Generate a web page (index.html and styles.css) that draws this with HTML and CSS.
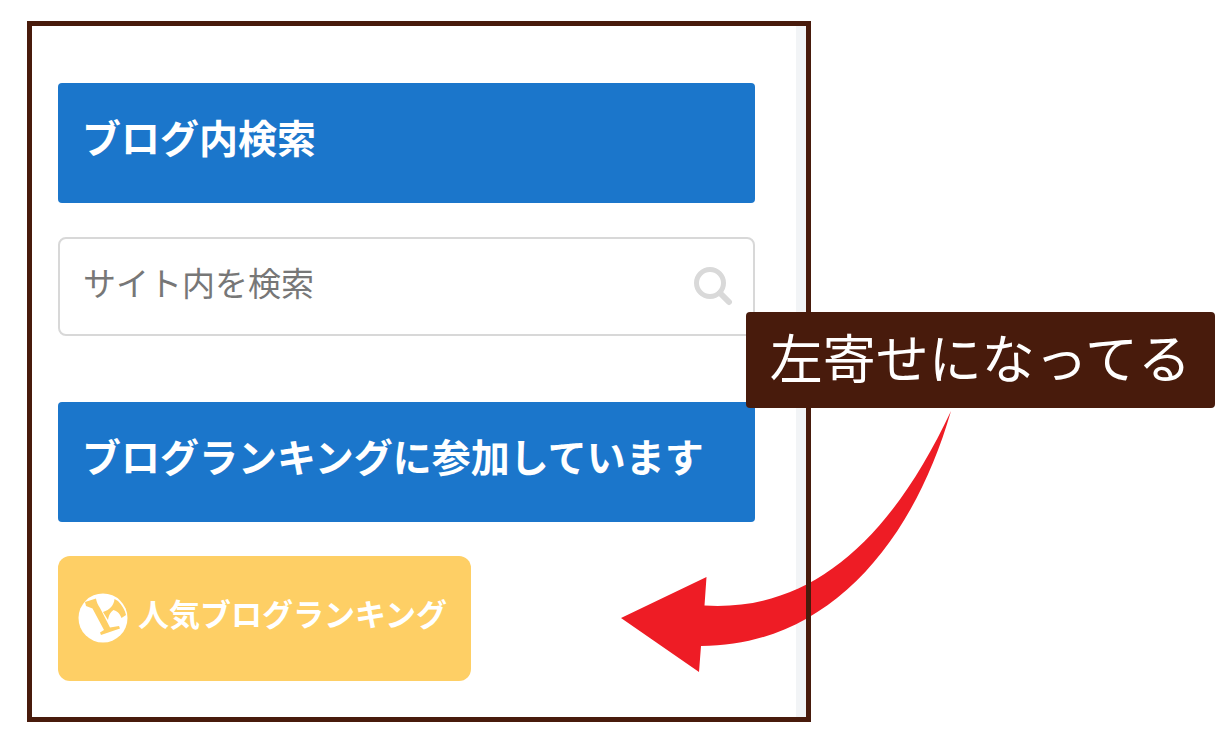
FILE: index.html
```html
<!DOCTYPE html>
<html lang="ja">
<head>
  <meta charset="utf-8">
  <meta name="viewport" content="width=device-width, initial-scale=1">
  <title>ブログ内検索</title>
  <link rel="stylesheet" href="styles.css">
</head>
<body>
  <main class="stage">
    <aside class="sidebar">
      <section class="widget">
        <h2 class="widget-title"><label for="site-search">ブログ内検索</label></h2>
        <form class="search" role="search">
          <input class="search-input" id="site-search" type="text" placeholder="サイト内を検索">
          <button class="search-button" type="button" aria-label="検索">
            <svg class="search-icon" viewBox="0 0 40 40" aria-hidden="true">
              <circle cx="17" cy="16" r="13.5" fill="none" stroke="currentColor" stroke-width="5"/>
              <path d="M27 26L36 35" fill="none" stroke="currentColor" stroke-width="6" stroke-linecap="round"/>
            </svg>
          </button>
        </form>
      </section>
      <section class="widget">
        <h2 class="widget-title">ブログランキングに参加しています</h2>
        <a class="ranking" href="#">
          <svg class="ranking-icon" viewBox="0 0 50 50" aria-hidden="true">
            <circle cx="25" cy="25" r="24.500" fill="#fff"/>
            <path d="M7 9L18 5.500C18.500 9 20 12 22 15L32 34.500L41 33L42 35.500L23 42L22 39.500L26 37L14.500 15.500L8 13Z" fill="#fecf65"/>
            <path d="M25 19C32 17 36 12 36.500 6L40 8C44 12 47 17 48 22L43.500 25C41.500 20 39 18 35.500 17C33 19 31 21 30 27Z" fill="#fecf65"/>
          </svg>
          <span>人気ブログランキング</span>
        </a>
      </section>
    </aside>
    <svg class="arrow" viewBox="0 0 331 263" aria-hidden="true">
      <path d="M331 1C292 136 206 236 81 236L79 262L1 208L86.500 167L84.500 195.500C190 202 270 131 331 1Z" fill="#ee1c25"/>
    </svg>
    <p class="callout">左寄せになってる</p>
  </main>
</body>
</html>
```
FILE: styles.css
```css
* {
  box-sizing: border-box;
}

body {
  margin: 0;
  background: #fff;
  font-family: "Noto Sans CJK JP", sans-serif;
}

.stage {
  position: relative;
  display: grid;
  grid-template-columns: 2fr 1fr;
  padding: 21px 27px 16px;
}

.sidebar {
  position: relative;
  display: flex;
  flex-direction: column;
  gap: 66px;
  padding: 62px 56px 41px 31px;
  background: linear-gradient(#f2f4f6, #f2f4f6) right 5px top / 10px 100% no-repeat;
}

.sidebar::after {
  content: "";
  position: absolute;
  inset: 0;
  z-index: 2;
  border: 5px solid #481b0c;
  pointer-events: none;
}

.widget {
  display: flex;
  flex-direction: column;
  align-items: flex-start;
  gap: 34px;
}

.widget-title {
  width: 100%;
  margin: 0;
  padding: 25px 24px 39px;
  border-radius: 4px;
  background: #1b76cb;
  color: #fff;
  font-size: 39px;
  font-weight: 700;
  line-height: 56px;
}

.search {
  display: flex;
  align-items: center;
  width: 100%;
  padding: 0 20px 0 23px;
  border: 2px solid #d8d8d8;
  border-radius: 8px;
}

.search-input {
  flex: 1;
  min-width: 0;
  padding: 19px 0 28px;
  border: 0;
  outline: 0;
  background: none;
  color: #777;
  font-family: inherit;
  font-size: 33px;
  line-height: 48px;
}

.search-input::placeholder {
  color: #777;
  opacity: 1;
}

.search-button {
  display: flex;
  padding: 0;
  border: 0;
  background: none;
  color: #d9d9d9;
}

.search-icon {
  width: 40px;
  height: 40px;
}

.ranking {
  display: flex;
  align-items: flex-start;
  gap: 10px;
  padding: 37px 24px 38px 20px;
  border-radius: 12px;
  background: #fecf65;
  color: #fff;
  font-size: 31px;
  font-weight: 700;
  line-height: 40px;
  text-decoration: none;
}

.ranking-icon {
  width: 50px;
  height: 50px;
}

.arrow {
  position: absolute;
  z-index: 1;
  top: 410px;
  left: 620px;
  width: 331px;
  height: 263px;
}

.callout {
  position: absolute;
  z-index: 3;
  top: 312px;
  right: 15px;
  margin: 0;
  padding: 8px 24px 16px;
  border-radius: 4px;
  background: #481b0c;
  color: #fff;
  font-size: 53px;
  font-weight: 400;
  line-height: 72px;
  white-space: nowrap;
}
```
